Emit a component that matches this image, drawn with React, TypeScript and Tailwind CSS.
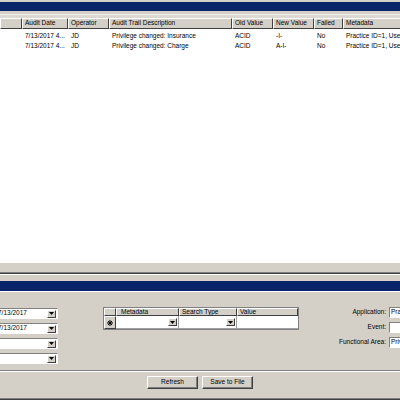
import React from 'react';

const raised = 'border border-t-white border-l-white border-r-[#404040] border-b-[#404040] bg-[#d4d0c8]';
const sunken = 'border border-t-[#808080] border-l-[#808080] border-r-white border-b-white';

const columns = [
  { title: '', w: 'w-[22px]' },
  { title: 'Audit Date', w: 'w-[46px]' },
  { title: 'Operator', w: 'w-[41px]' },
  { title: 'Audit Trail Description', w: 'w-[123px]' },
  { title: 'Old Value', w: 'w-[41px]' },
  { title: 'New Value', w: 'w-[41px]' },
  { title: 'Failed', w: 'w-[29px]' },
  { title: 'Metadata', w: 'w-[80px]' },
];

const rows = [
  ['', '7/13/2017 4...', 'JD', 'Privilege changed: Insurance', 'ACID', '-I-', 'No', 'Practice ID=1, User'],
  ['', '7/13/2017 4...', 'JD', 'Privilege changed: Charge', 'ACID', 'A-I-', 'No', 'Practice ID=1, User'],
];

const Arrow = () => (
  <svg width="5" height="3" viewBox="0 0 5 3">
    <path d="M0 0h5L2.5 3z" fill="#000" />
  </svg>
);

const DropButton: React.FC<{ className?: string }> = ({ className = '' }) => (
  <div className={`w-[9px] h-[8px] flex items-center justify-center shrink-0 ${raised} ${className}`}>
    <Arrow />
  </div>
);

const Combo: React.FC<{ value?: string }> = ({ value = '' }) => (
  <div className={`h-[11px] bg-white flex items-center ${sunken}`}>
    <span className="flex-1 pl-[1px] leading-none whitespace-nowrap overflow-hidden">{value}</span>
    <DropButton className="mr-[1px]" />
  </div>
);

const App: React.FC = () => {
  return (
    <div className="w-[400px] h-[400px] overflow-hidden bg-[#d4d0c8] flex flex-col text-black text-[6.5px] font-['Liberation_Sans',Arial,sans-serif]">
      {/* top title bar */}
      <div className="h-[2px] shrink-0" />
      <div className="h-[9px] shrink-0 bg-[#0a246a]" />
      <div className="h-[3px] shrink-0" />
      <div className="h-[1px] shrink-0 bg-[#f0efea]" />
      <div className="h-[3px] shrink-0 bg-[#dcd9d2]" />

      {/* audit grid */}
      <div className="h-[245px] shrink-0 bg-white flex flex-col overflow-hidden">
        <div className="flex h-[11px] shrink-0 w-[440px]">
          {columns.map((c, i) => (
            <div key={i} className={`${c.w} shrink-0 h-full ${raised} flex items-center pl-[2px] whitespace-nowrap overflow-hidden leading-none`}>
              {c.title}
            </div>
          ))}
          <div className={`flex-1 h-full ${raised}`} />
        </div>
        <div className="h-[2px] shrink-0" />
        {rows.map((r, ri) => (
          <div key={ri} className="flex h-[10px] shrink-0 items-center w-[440px]">
            {r.map((cell, ci) => (
              <div key={ci} className={`${columns[ci].w} shrink-0 pl-[3px] whitespace-nowrap leading-none`}>
                {cell}
              </div>
            ))}
          </div>
        ))}
      </div>

      {/* splitter */}
      <div className="h-[9px] shrink-0" />
      <div className="h-[1px] shrink-0 bg-[#808080]" />
      <div className="h-[1px] shrink-0 bg-[#404040]" />
      <div className="h-[1px] shrink-0 bg-white" />
      <div className="h-[6px] shrink-0" />
      <div className="h-[10px] shrink-0 bg-[#0a246a]" />
      <div className="h-[1px] shrink-0 bg-white" />

      {/* filter panel */}
      <div className="flex-1 flex flex-col pt-[15px]">
        <div className="h-[63px] shrink-0 flex items-start">
          <div className="ml-[-4px] w-[62px] shrink-0 mt-[1px] flex flex-col gap-[4px]">
            <Combo value="7/13/2017" />
            <Combo value="7/13/2017" />
            <Combo />
            <Combo />
          </div>

          <div className="ml-[45px] w-[196px] shrink-0 border border-[#808080] flex flex-col bg-[#d4d0c8]">
            <div className="flex h-[8px]">
              <div className={`w-[12px] shrink-0 ${raised}`} />
              <div className={`w-[63px] shrink-0 ${raised} pl-[4px] flex items-center leading-none`}>Metadata</div>
              <div className={`w-[58px] shrink-0 ${raised} pl-[2px] flex items-center leading-none whitespace-nowrap`}>Search Type</div>
              <div className={`flex-1 ${raised} pl-[2px] flex items-center leading-none`}>Value</div>
            </div>
            <div className="flex h-[13px]">
              <div className={`w-[12px] shrink-0 ${raised} flex items-center justify-center`}>
                <svg width="6" height="6" viewBox="0 0 6 6">
                  <path d="M3 0v6M0 3h6M1 1l4 4M5 1L1 5" stroke="#000" strokeWidth="1" />
                </svg>
              </div>
              <div className="w-[63px] shrink-0 bg-white border-r border-b border-[#a0a0a0] flex items-center justify-end pr-[1px]">
                <DropButton />
              </div>
              <div className="w-[58px] shrink-0 bg-white border-r border-b border-[#a0a0a0] flex items-center justify-end pr-[1px]">
                <DropButton />
              </div>
              <div className="flex-1 bg-white border-b border-[#a0a0a0]" />
            </div>
          </div>

          <div className="ml-[37px] shrink-0 flex flex-col gap-[4px]">
            {[
              ['Application:', 'Practice'],
              ['Event:', ''],
              ['Functional Area:', 'Privileges'],
            ].map(([label, value]) => (
              <div key={label} className="flex items-center h-[11px]">
                <span className="w-[50px] shrink-0 text-right whitespace-nowrap leading-none">{label}</span>
                <div className={`ml-[3px] w-[40px] shrink-0 h-full bg-white ${sunken} pl-[1px] flex items-center leading-none whitespace-nowrap overflow-hidden`}>
                  {value}
                </div>
              </div>
            ))}
          </div>
        </div>

        <div className="h-[1px] shrink-0 bg-[#808080]" />
        <div className="h-[1px] shrink-0 bg-white" />

        <div className="flex justify-center gap-[4px] pt-[4px]">
          <button className={`w-[51px] h-[13px] ${raised} shadow-[inset_-1px_-1px_0_#808080] leading-none`}>Refresh</button>
          <button className={`w-[51px] h-[13px] ${raised} shadow-[inset_-1px_-1px_0_#808080] leading-none`}>Save to File</button>
        </div>

        <div className="flex-1" />
        <div className="h-[1px] shrink-0 bg-[#808080]" />
        <div className="h-[1px] shrink-0 bg-[#404040]" />
      </div>
    </div>
  );
};

export default App;
